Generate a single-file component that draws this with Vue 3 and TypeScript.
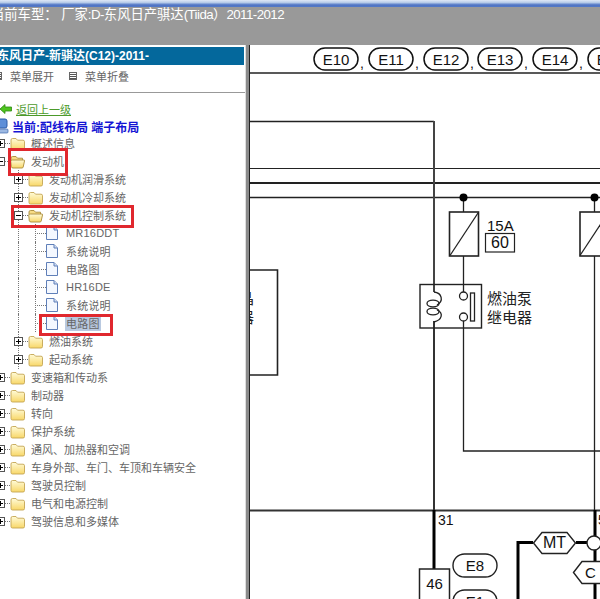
<script setup lang="ts">
type Row = {
  label: string
  level: 0 | 1 | 2
  icon: 'folder' | 'open' | 'doc'
  expander?: '+' | '-'
  selected?: boolean
}

const rows: Row[] = [
  { label: '概述信息', level: 0, icon: 'folder', expander: '+' },
  { label: '发动机', level: 0, icon: 'open', expander: '-' },
  { label: '发动机润滑系统', level: 1, icon: 'folder', expander: '+' },
  { label: '发动机冷却系统', level: 1, icon: 'folder', expander: '+' },
  { label: '发动机控制系统', level: 1, icon: 'open', expander: '-' },
  { label: 'MR16DDT', level: 2, icon: 'doc' },
  { label: '系统说明', level: 2, icon: 'doc' },
  { label: '电路图', level: 2, icon: 'doc' },
  { label: 'HR16DE', level: 2, icon: 'doc' },
  { label: '系统说明', level: 2, icon: 'doc' },
  { label: '电路图', level: 2, icon: 'doc', selected: true },
  { label: '燃油系统', level: 1, icon: 'folder', expander: '+' },
  { label: '起动系统', level: 1, icon: 'folder', expander: '+' },
  { label: '变速箱和传动系', level: 0, icon: 'folder', expander: '+' },
  { label: '制动器', level: 0, icon: 'folder', expander: '+' },
  { label: '转向', level: 0, icon: 'folder', expander: '+' },
  { label: '保护系统', level: 0, icon: 'folder', expander: '+' },
  { label: '通风、加热器和空调', level: 0, icon: 'folder', expander: '+' },
  { label: '车身外部、车门、车顶和车辆安全', level: 0, icon: 'folder', expander: '+' },
  { label: '驾驶员控制', level: 0, icon: 'folder', expander: '+' },
  { label: '电气和电源控制', level: 0, icon: 'folder', expander: '+' },
  { label: '驾驶信息和多媒体', level: 0, icon: 'folder', expander: '+' },
]

const connectors = [
  { name: 'E10', x: 314 },
  { name: 'E11', x: 369 },
  { name: 'E12', x: 424 },
  { name: 'E13', x: 478 },
  { name: 'E14', x: 533 },
  { name: 'E15', x: 588 },
]
</script>

<template>
  <div class="page">
    <header class="top">
      <div class="caption-strip"></div>
      <div class="vehicle">当前车型： 厂家<span class="latin">:D-</span>东风日产骐达<span class="latin">(Tiida</span>）<span class="latin">2011-2012</span></div>
    </header>

    <div class="main">
      <aside class="side">
        <svg class="defs" width="0" height="0">
          <defs>
            <linearGradient id="folderFill" x1="0" y1="0" x2="0" y2="1">
              <stop offset="0" stop-color="#fffbd8" />
              <stop offset="1" stop-color="#f8d768" />
            </linearGradient>
          </defs>
        </svg>

        <div class="title">东风日产-新骐达(C12)-2011-</div>

        <div class="menu">
          <span class="menu-item first"><i class="menu-icon"></i>菜单展开</span>
          <span class="menu-item"><i class="menu-icon"></i>菜单折叠</span>
        </div>

        <div class="tree">
          <div class="back">
            <svg width="12" height="10" viewBox="0 0 12 10">
              <path d="M0 5 L5 0.5 V3 H11.5 V7 H5 V9.5 Z" fill="#4fc41f" stroke="#2d8a12" stroke-width="0.8" />
            </svg>
            <a class="back-link">返回上一级</a>
          </div>
          <div class="current">
            <svg width="9" height="16" viewBox="0 0 9 16">
              <rect x="-4" y="1" width="11" height="9" rx="2" fill="#5d8fd8" stroke="#2a5aa8" />
              <rect x="-4" y="11" width="12" height="4" rx="1" fill="#9db9e2" stroke="#3d68ad" stroke-width="0.7" />
            </svg>
            <span>当前:配线布局 端子布局</span>
          </div>

          <div
            v-for="(row, i) in rows"
            :key="i"
            class="row"
            :class="`l${row.level}`"
          >
            <span v-if="row.expander" class="expander">
              <svg width="9" height="9" viewBox="0 0 9 9">
                <rect x="0.5" y="0.5" width="8" height="8" fill="#fff" stroke="#555" />
                <path d="M2 4.5 H7" stroke="#000" />
                <path v-if="row.expander === '+'" d="M4.5 2 V7" stroke="#000" />
              </svg>
            </span>
            <span class="twig"></span>

            <svg v-if="row.icon === 'folder'" class="icon folder" width="15" height="14" viewBox="0 0 15 14">
              <path
                d="M1 3 Q1 1.5 2.5 1.5 H6 L7.5 3.2 H13 Q14.5 3.2 14.5 4.7 V11.5 Q14.5 13 13 13 H2.5 Q1 13 1 11.5 Z"
                fill="url(#folderFill)"
                stroke="#c4a552"
                stroke-width="0.9"
              />
            </svg>
            <svg v-else-if="row.icon === 'open'" class="icon folder" width="15" height="14" viewBox="0 0 15 14">
              <path
                d="M1 3 Q1 1.5 2.5 1.5 H6 L7.5 3.2 H12.5 V5.5 H1 Z"
                fill="#f7dc86"
                stroke="#a98b3a"
                stroke-width="0.9"
              />
              <path
                d="M0.7 6 Q1 5 2.5 5 H14 Q14.8 5 14.5 6 L13.2 12 Q13 13 12 13 H3 Q1.6 13 1.3 11.8 Z"
                fill="url(#folderFill)"
                stroke="#a98b3a"
                stroke-width="0.9"
              />
            </svg>
            <svg v-else class="icon" width="12" height="14" viewBox="0 0 12 14">
              <path d="M0.5 0.5 H8 L11.5 4 V13.5 H0.5 Z" fill="#f4f8ff" stroke="#5f7fb8" />
              <path d="M8 0.5 V4 H11.5" fill="#cfdcf2" stroke="#5f7fb8" />
            </svg>

            <span class="label" :class="{ selected: row.selected }">{{ row.label }}</span>
          </div>
        </div>

        <i class="mark mark-engine"></i>
        <i class="mark mark-control"></i>
        <i class="mark mark-circuit"></i>
      </aside>

      <div class="splitter"></div>

      <svg class="diagram" viewBox="250 45 350 554" width="350" height="554">
        <g fill="#fff" stroke="#111" stroke-width="1.5">
          <rect v-for="c in connectors" :key="c.name" :x="c.x" y="48" width="44" height="22" rx="11" />
        </g>
        <g class="wire-text" font-size="15" text-anchor="middle">
          <text v-for="c in connectors" :key="c.name + 't'" :x="c.x + 22" y="65">{{ c.name }}</text>
        </g>
        <g class="wire-text" font-size="14">
          <text v-for="c in connectors.slice(0, 5)" :key="c.name + 'c'" :x="c.x + 46" y="68">,</text>
        </g>

        <g stroke="#222" fill="none">
          <path d="M250 73 H600" stroke-width="1.5" />
          <path d="M250 121.5 H434" stroke-width="1.5" />
          <path d="M250 168.5 H600" stroke-width="1.2" />
          <path d="M250 183 H600" stroke-width="2.2" />
          <path d="M250 197.5 H600" stroke-width="1.5" />
          <path d="M434 121 V292" stroke-width="2" stroke="#444" />
          <path d="M434 321 V510" stroke-width="2" stroke="#333" />
          <path d="M250 510.5 H600" stroke-width="1.8" stroke="#333" />
          <path d="M434 510 V569" stroke-width="3" stroke="#000" />

          <path d="M250 270 H277.5 V375 H250" stroke-width="1.6" />

          <path d="M463.5 197 V212 M463.5 256 V292 M463.5 321 V451 H600" stroke-width="1.3" />
          <path d="M594.5 197 V212 M594.5 256 V510" stroke-width="1.3" />

          <rect x="449.5" y="212" width="29" height="44" fill="#fff" stroke-width="1.6" />
          <path d="M450 255.5 L478 213" stroke-width="1.3" />
          <rect x="580" y="212" width="40" height="44" fill="#fff" stroke-width="1.6" />
          <path d="M580 255.5 L608 213" stroke-width="1.3" />
          <rect x="485.5" y="233.5" width="29" height="18.5" stroke-width="1.2" />

          <rect x="420" y="284.5" width="61.5" height="43.5" stroke-width="1.4" />
          <path d="M434 292 C442 293 444 301 437 305" stroke-width="1.3" />
          <path d="M437 310 C444 313 442 320 434 322" stroke-width="1.3" />
          <ellipse cx="433" cy="303.5" rx="6" ry="3.4" stroke-width="1.3" />
          <ellipse cx="433" cy="311.5" rx="6" ry="3.4" stroke-width="1.3" />
          <circle cx="463.5" cy="296" r="4" fill="#fff" stroke-width="1.3" />
          <circle cx="463.5" cy="317" r="4" fill="#fff" stroke-width="1.3" />
          <rect x="470.5" y="293" width="4" height="28" stroke-width="1.3" />

          <rect x="419.5" y="569" width="30" height="32" stroke-width="1.5" />
          <rect x="453" y="554" width="44" height="23" rx="11.5" stroke-width="1.4" />
          <rect x="453" y="590" width="44" height="23" rx="11.5" stroke-width="1.4" />

          <path d="M518 599 V542.5 H533 M576 542.5 H588" stroke="#000" stroke-width="3" />
          <path d="M595 510 V536 M595 550 V561 M595 584 V599" stroke="#000" stroke-width="3" />
          <path d="M533.5 543 L542 532.5 H567 L575.5 543 L567 553.5 H542 Z" stroke-width="1.4" />
          <circle cx="594" cy="543" r="7" fill="#fff" stroke-width="1.4" />
          <path d="M573.5 572.5 L582 561.5 H610 V583.5 H582 Z" fill="#fff" stroke-width="1.4" />
        </g>

        <g fill="#000">
          <circle cx="463.5" cy="197.5" r="4" />
          <circle cx="594.5" cy="197.5" r="4" />
        </g>

        <g class="wire-text">
          <text x="487" y="231" font-size="15">15A</text>
          <text x="500" y="248" font-size="16" text-anchor="middle">60</text>
          <text x="438" y="525" font-size="14">31</text>
          <text x="598" y="525" font-size="14">5</text>
          <text x="434.5" y="589" font-size="15" text-anchor="middle">46</text>
          <text x="475" y="571" font-size="15" text-anchor="middle">E8</text>
          <text x="475" y="607" font-size="15" text-anchor="middle">E1</text>
          <text x="554.5" y="548" font-size="16" text-anchor="middle">MT</text>
          <text x="585" y="578" font-size="15">C</text>
        </g>
        <g class="cjk-text" font-size="15">
          <text x="487" y="304">燃油泵</text>
          <text x="487" y="323">继电器</text>
          <text x="239" y="304">晶</text>
          <text x="239" y="323">器</text>
        </g>
      </svg>
    </div>
  </div>
</template>

<style>
html,
body {
  margin: 0;
  background: #fff;
  overflow: hidden;
}
</style>

<style scoped>
.page {
  width: 600px;
  height: 599px;
  overflow: hidden;
  display: flex;
  flex-direction: column;
  font-family: 'Liberation Sans', 'Noto Sans CJK SC', sans-serif;
}

.top {
  height: 45px;
  flex: none;
  background: #999;
  overflow: hidden;
}

.caption-strip {
  height: 7px;
  background: linear-gradient(#dfe8f6 0, #b9cdea 35%, #4f74c4 70%, #5378c6 100%);
}

.vehicle {
  margin-left: -9px;
  height: 16px;
  line-height: 16px;
  color: #fff;
  font-size: 13.3px;
  white-space: pre;
}

.latin {
  font-size: 13.3px;
  letter-spacing: -0.55px;
}

.main {
  flex: 1;
  display: flex;
  min-height: 0;
}

.side {
  position: relative;
  width: 245px;
  flex: none;
  overflow: hidden;
  background: #fff;
}

.defs {
  position: absolute;
}

.title {
  margin-top: 2px;
  height: 18px;
  line-height: 18px;
  width: 247px;
  margin-left: -3px;
  background: #04689c;
  color: #fff;
  font-size: 12px;
  font-weight: bold;
  white-space: nowrap;
}

.menu {
  height: 28px;
  box-sizing: border-box;
  padding-bottom: 5px;
  border-bottom: 1px solid #999;
  display: flex;
  align-items: center;
  gap: 15px;
  font-size: 11px;
  color: #666;
}

.menu-item {
  display: flex;
  align-items: center;
  gap: 8px;
}

.menu-item.first {
  margin-left: -6px;
}

.menu-icon {
  width: 8px;
  height: 8px;
  border: 1px solid #666;
  background: repeating-linear-gradient(#fff 0 1px, #555 1px 2px);
  box-sizing: border-box;
}

.tree {
  padding-top: 7px;
  font-size: 11px;
  color: #666;
}

.back {
  height: 18px;
  display: flex;
  align-items: center;
  gap: 4px;
}

.back-link {
  color: #4c9a2a;
  text-decoration: underline;
}

.current {
  height: 16px;
  display: flex;
  align-items: center;
  gap: 3px;
  color: #1414d4;
  font-size: 12px;
  font-weight: bold;
}

.row {
  position: relative;
  height: 18px;
  display: flex;
  align-items: center;
  white-space: nowrap;
}

.l0 {
  margin-left: -4px;
}

.l1 {
  margin-left: 14px;
}

.l2 {
  margin-left: 35px;
}

.expander {
  position: relative;
  width: 9px;
  height: 9px;
  flex: none;
}

.expander svg {
  display: block;
  position: relative;
}

.twig {
  width: 5px;
  flex: none;
  border-bottom: 1px dotted #777;
}

.l2 .twig {
  width: 11px;
}

.icon {
  flex: none;
}

.folder {
  margin-top: 2px;
}

.label {
  margin-left: 5px;
  padding: 0 1px;
  margin-right: -1px;
}

.l2 .label {
  margin-left: 7px;
  letter-spacing: 0.2px;
}

.label.selected {
  background: #b9c9e0;
}

/* dotted tree guides */
.l1 .expander::before {
  content: '';
  position: absolute;
  left: 4px;
  top: -5px;
  height: 19px;
  border-left: 1px dotted #777;
}

.l2::before,
.l2::after {
  content: '';
  position: absolute;
  top: 0;
  height: 18px;
  border-left: 1px dotted #777;
}

.l2::before {
  left: 0;
}

.l2::after {
  left: -17px;
}

/* red markup drawn over the screenshot */
.mark {
  position: absolute;
  box-sizing: border-box;
  border: 3px solid #e0282e;
}

.mark-engine {
  left: 8px;
  top: 103px;
  width: 60px;
  height: 28px;
}

.mark-control {
  left: 11px;
  top: 160px;
  width: 123px;
  height: 23px;
}

.mark-circuit {
  left: 39px;
  top: 269px;
  width: 74px;
  height: 22px;
}

.splitter {
  width: 5px;
  flex: none;
  box-sizing: border-box;
  background: #8a8a8a;
  border-right: 1px solid #222;
  border-left: 1px solid #ddd;
}

.diagram {
  display: block;
  flex: none;
}

.wire-text text {
  font-family: 'Liberation Sans', sans-serif;
  fill: #111;
}

.cjk-text text {
  font-family: 'Noto Sans CJK SC', sans-serif;
  fill: #222;
}
</style>
